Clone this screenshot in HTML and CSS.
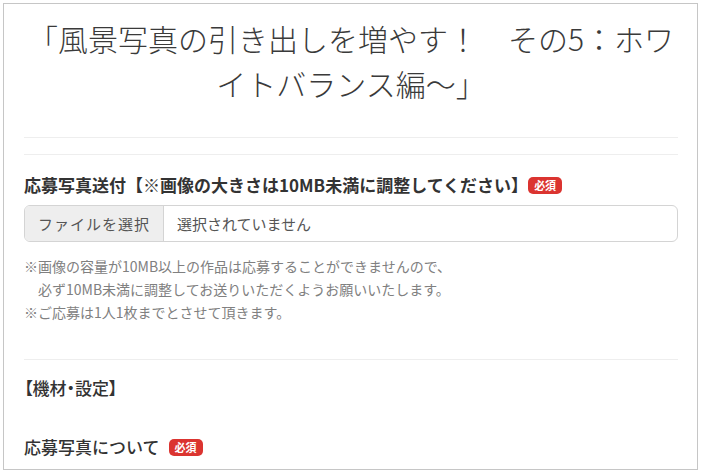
FILE: index.html
```html
<!doctype html>
<html>
<head>
    <meta charset="utf-8">
    <title>応募フォーム</title>
    <link rel="stylesheet" href="styles.css">
</head>
<body>

<div class="frame">
    <h1 class="entry_title">「風景写真の引き出しを増やす！　その5：ホワイトバランス編〜」</h1>

    <div class="form_row first">
        <label class="form_label">応募写真送付【※画像の大きさは10MB未満に調整してください】<span class="required after_bracket">必須</span></label>
        <div class="file_box">
            <span class="file_btn">ファイルを選択</span>
            <span class="file_name">選択されていません</span>
        </div>
        <p class="form_note">
            ※画像の容量が10MB以上の作品は応募することができませんので、<br>
            　必ず10MB未満に調整してお送りいただくようお願いいたします。<br>
            ※ご応募は1人1枚までとさせて頂きます。
        </p>
    </div>

    <div class="form_row second_row">
        <p class="form_label plain tight">【機材・設定】</p>
        <label class="form_label plain second">応募写真について<span class="required">必須</span></label>
    </div>
</div>

</body>
</html>
```

FILE: styles.css
```css
body {
    background: white;
    color: #333;
    margin: 0;
    font-family: "Noto Sans CJK JP", "Noto Sans", sans-serif;
}

.frame {
    margin: 3px;
    height: calc(100vh - 6px);
    box-sizing: border-box;
    border: 1px solid #c6c6c6;
    padding: 12px 19px 0 20px;
    overflow: hidden;
}

.entry_title {
    font-size: 30px;
    font-weight: 300;
    line-height: 45px;
    text-align: center;
    margin: 0;
    padding-bottom: 31px;
    border-bottom: 1px solid #eee;
    color: #3a3a3a;
}

.form_row {
    margin-top: 16px;
    border-top: 1px solid #eee;
    padding-top: 18px;
}

.second_row {
    margin-top: 35px;
    padding-top: 16px;
}

.form_label {
    display: flex;
    align-items: center;
    font-size: 17px;
    line-height: 24px;
    font-weight: bold;
    margin: 0;
}

.form_label.plain {
    font-weight: 500;
}

.form_label.tight {
    font-feature-settings: "palt";
}

.form_label.second {
    margin-top: 35px;
}

.required {
    background: #db3430;
    color: #fff;
    font-size: 11px;
    font-weight: bold;
    line-height: 17px;
    padding: 0 6px;
    border-radius: 5px;
    margin-left: 9px;
}

.required.after_bracket {
    margin-left: 0;
}

.file_box {
    display: flex;
    margin-top: 8px;
    height: 37px;
    box-sizing: border-box;
    border: 1px solid #d4d4d4;
    border-radius: 6px;
    overflow: hidden;
    font-size: 15px;
    color: #555;
}

.file_btn {
    display: flex;
    align-items: center;
    padding: 0 13px;
    background: #eee;
    border-right: 1px solid #d4d4d4;
    letter-spacing: 1px;
}

.file_name {
    display: flex;
    align-items: center;
    padding-left: 13px;
}

.form_note {
    font-size: 14px;
    line-height: 23px;
    color: #808080;
    margin: 13px 0 0;
}
```
